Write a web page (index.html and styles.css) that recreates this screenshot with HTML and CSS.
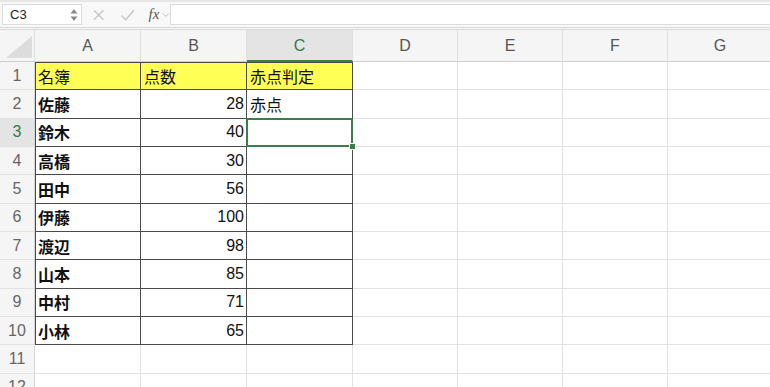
FILE: index.html
```html
<!DOCTYPE html>
<html lang="ja">
<head>
    <meta charset="UTF-8">
    <title>Sheet1</title>
    <link rel="stylesheet" href="styles.css">
</head>
<body>

<!-- Formula bar -->
<div class="toolbar">
    <div class="namebox">
        <span>C3</span>
        <span class="spin">
            <svg width="8" height="14" viewBox="0 0 8 14"><path d="M4 1 L7.5 5.5 H0.5 Z M4 13 L7.5 8.5 H0.5 Z" fill="#8a8a8a"/></svg>
        </span>
    </div>
    <div class="tools">
        <svg class="tool" width="14" height="14" viewBox="0 0 14 14"><path d="M2 2 L12 12 M12 2 L2 12" stroke="#c9c9c9" stroke-width="1.6"/></svg>
        <svg class="tool" width="16" height="14" viewBox="0 0 16 14"><path d="M1.5 7.5 L6 12 L14.5 2" stroke="#c9c9c9" stroke-width="1.6" fill="none"/></svg>
        <span class="fx">fx</span>
        <svg class="chev" width="8" height="6" viewBox="0 0 8 6"><path d="M1 1.5 L4 4.5 L7 1.5" stroke="#bbb" stroke-width="1" fill="none"/></svg>
    </div>
    <div class="formula"></div>
</div>

<!-- Sheet -->
<div class="sheet">
    <div class="hd corner">
        <svg width="26" height="22" viewBox="0 0 26 22"><path d="M26 0 L26 22 L0 22 Z" fill="#dcdcdc"/></svg>
    </div>
    <div class="hd col">A</div>
    <div class="hd col">B</div>
    <div class="hd col sel">C</div>
    <div class="hd col">D</div>
    <div class="hd col">E</div>
    <div class="hd col">F</div>
    <div class="hd col">G</div>

    <div class="rn">1</div>
    <div class="c t first top yellow">名簿</div>
    <div class="c t top yellow">点数</div>
    <div class="c t top yellow">赤点判定</div>
    <div class="c"></div><div class="c"></div><div class="c"></div><div class="c"></div>

    <div class="rn">2</div>
    <div class="c t first name">佐藤</div>
    <div class="c t num">28</div>
    <div class="c t">赤点</div>
    <div class="c"></div><div class="c"></div><div class="c"></div><div class="c"></div>

    <div class="rn sel">3</div>
    <div class="c t first name">鈴木</div>
    <div class="c t num">40</div>
    <div class="c t active"></div>
    <div class="c"></div><div class="c"></div><div class="c"></div><div class="c"></div>

    <div class="rn">4</div>
    <div class="c t first name">高橋</div>
    <div class="c t num">30</div>
    <div class="c t"></div>
    <div class="c"></div><div class="c"></div><div class="c"></div><div class="c"></div>

    <div class="rn">5</div>
    <div class="c t first name">田中</div>
    <div class="c t num">56</div>
    <div class="c t"></div>
    <div class="c"></div><div class="c"></div><div class="c"></div><div class="c"></div>

    <div class="rn">6</div>
    <div class="c t first name">伊藤</div>
    <div class="c t num">100</div>
    <div class="c t"></div>
    <div class="c"></div><div class="c"></div><div class="c"></div><div class="c"></div>

    <div class="rn">7</div>
    <div class="c t first name">渡辺</div>
    <div class="c t num">98</div>
    <div class="c t"></div>
    <div class="c"></div><div class="c"></div><div class="c"></div><div class="c"></div>

    <div class="rn">8</div>
    <div class="c t first name">山本</div>
    <div class="c t num">85</div>
    <div class="c t"></div>
    <div class="c"></div><div class="c"></div><div class="c"></div><div class="c"></div>

    <div class="rn">9</div>
    <div class="c t first name">中村</div>
    <div class="c t num">71</div>
    <div class="c t"></div>
    <div class="c"></div><div class="c"></div><div class="c"></div><div class="c"></div>

    <div class="rn">10</div>
    <div class="c t first name">小林</div>
    <div class="c t num">65</div>
    <div class="c t"></div>
    <div class="c"></div><div class="c"></div><div class="c"></div><div class="c"></div>

    <div class="rn">11</div>
    <div class="c"></div><div class="c"></div><div class="c"></div><div class="c"></div>
    <div class="c"></div><div class="c"></div><div class="c"></div>

    <div class="rn">12</div>
    <div class="c"></div><div class="c"></div><div class="c"></div><div class="c"></div>
    <div class="c"></div><div class="c"></div><div class="c"></div>
</div>

</body>
</html>
```

FILE: styles.css
```css
body {
    margin: 0;
    background-color: white;
    font-family: 'Liberation Sans', 'Noto Sans CJK JP', sans-serif;
    overflow: hidden;
}

/* Formula bar */
.toolbar {
    display: flex;
    align-items: center;
    height: 21px;
    padding: 2px 0;
    background-color: #f8f8f8;
    border-top: 2px solid #e6e6e6;
    border-bottom: 3px double #d8d8d8;
}

.namebox {
    display: flex;
    align-items: center;
    justify-content: space-between;
    width: 80px;
    height: 21px;
    margin-left: 2px;
    padding: 0 3px 0 7px;
    box-sizing: border-box;
    background-color: white;
    border: 1px solid #dcdcdc;
    font-size: 13px;
    color: #222;
}

.spin {
    display: flex;
}

.tools {
    display: flex;
    align-items: center;
    width: 88px;
    padding-left: 10px;
    box-sizing: border-box;
}

.tool {
    margin-right: 15px;
}

.fx {
    font-family: 'Liberation Serif', serif;
    font-style: italic;
    font-size: 15px;
    color: #555;
    margin-left: -2px;
}

.chev {
    margin-left: 3px;
}

.formula {
    flex: 1;
    height: 19px;
    background-color: white;
    border: 1px solid #dcdcdc;
    border-right: none;
}

/* Sheet grid */
.sheet {
    display: grid;
    grid-template-columns: 35px 106px 106px 106px 105px 105px 105px 105px;
    grid-template-rows: 32px;
    grid-auto-rows: 28.35px;
}

.hd {
    background-color: #f5f5f5;
    border-right: 1px solid #e0e0e0;
    border-bottom: 1px solid #cdcdcd;
    box-sizing: border-box;
}

.corner {
    display: flex;
    align-items: flex-end;
    justify-content: flex-end;
    padding: 0 2px 3px 0;
}

.col {
    display: flex;
    align-items: center;
    justify-content: center;
    font-size: 16px;
    color: #555;
    padding-top: 1px;
}

.col.sel {
    background-color: #e4e4e4;
    color: #2f7a48;
    border-bottom: 2px solid #3c7d4f;
}

.rn {
    display: flex;
    align-items: center;
    justify-content: center;
    background-color: #f5f5f5;
    border-right: 1px solid #d6d6d6;
    border-bottom: 1px solid #e2e2e2;
    box-sizing: border-box;
    font-size: 16px;
    color: #666;
}

.rn.sel {
    background-color: #e4e4e4;
    color: #2f7a48;
}

.c {
    border-right: 1px solid #e2e2e2;
    border-bottom: 1px solid #e2e2e2;
    box-sizing: border-box;
}

/* Data table A1:C10 */
.t {
    display: flex;
    align-items: center;
    padding: 0 2px 0 3px;
    border-right-color: #4a4a4a;
    border-bottom-color: #4a4a4a;
    font-size: 16px;
    color: #111;
}

.first {
    box-shadow: inset 1px 0 #4a4a4a;
}

.top {
    box-shadow: inset 0 1px #4a4a4a;
}

.first.top {
    box-shadow: inset 1px 1px #4a4a4a;
}

.yellow {
    background-color: #ffff55;
}

.name {
    font-weight: bold;
}

.num {
    justify-content: flex-end;
}

.active {
    position: relative;
}

.active::after {
    content: '';
    position: absolute;
    top: -1px;
    left: -1px;
    right: -1px;
    bottom: -1px;
    border: 2px solid #3c7d4f;
}

.active::before {
    content: '';
    position: absolute;
    right: -4px;
    bottom: -4px;
    width: 5px;
    height: 5px;
    background-color: #3c7d4f;
    border: 1px solid white;
    z-index: 2;
}
```
